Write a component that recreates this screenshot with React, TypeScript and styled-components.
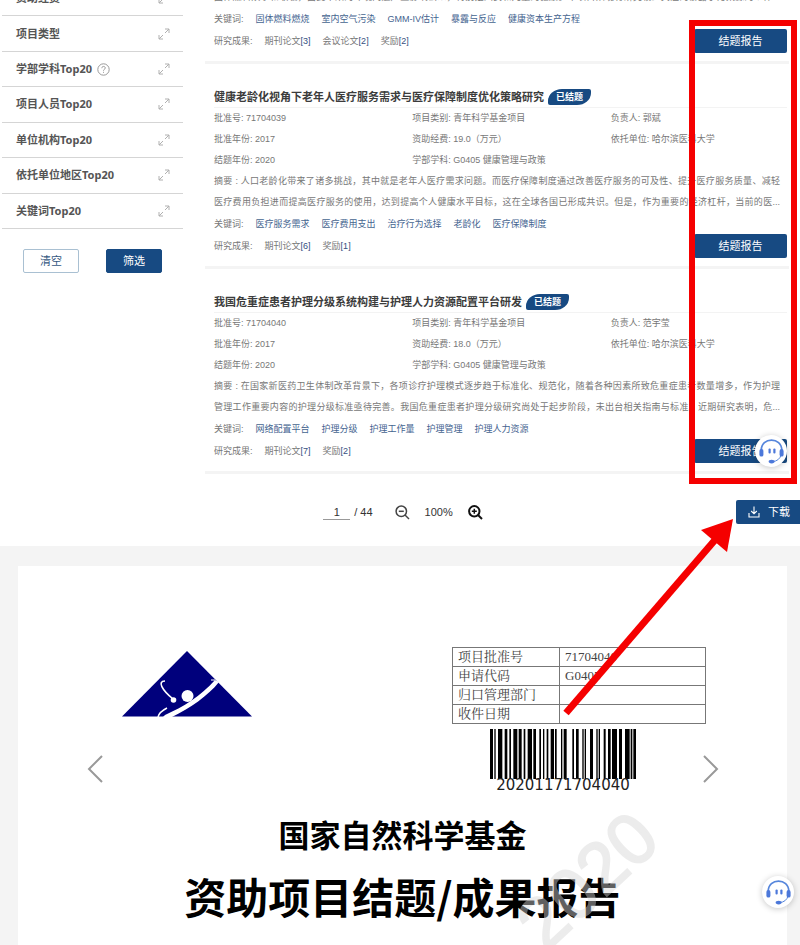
import React from "react";
import styled, { createGlobalStyle } from "styled-components";

const navy = "#174a82";
const ui = `"Liberation Sans", "Noto Sans CJK SC", sans-serif`;
const ui2 = `"Noto Sans", "Noto Sans CJK SC", sans-serif`;

const GlobalStyle = createGlobalStyle`
  * { box-sizing: border-box; }
  body { margin: 0; background: #fff; overflow: hidden; font-family: ${ui}; }
  button, input { font: inherit; }
  a { color: inherit; text-decoration: none; }
`;

const Screen = styled.div`
  position: relative;
  display: flex;
  flex-direction: column;
  height: 100vh;
  overflow: hidden;
`;

const Results = styled.section`
  position: relative;
  display: flex;
  flex: none;
  gap: 22px;
  padding-right: 11px;
  overflow: hidden;
`;

const Sidebar = styled.aside`
  flex: none;
  width: 183px;
  padding-left: 2px;
`;

const FilterList = styled.ul`
  display: grid;
  grid-auto-rows: 1fr;
  height: 248px;
  margin: -19px 0 0;
  padding: 0;
  list-style: none;
`;

const FilterItem = styled.li`
  display: flex;
  align-items: center;
  gap: 5px;
  padding: 0 13px 0 14px;
  border-bottom: 1px solid #d5d5d5;
  font: 700 11px/16px ${ui2};
  color: #555;
`;

const ExpandButton = styled.button`
  display: flex;
  margin-left: auto;
  padding: 0;
  border: 0;
  background: none;
  color: #b0b0b0;
`;

const FilterActions = styled.div`
  display: flex;
  gap: 27px;
  padding: 20px 21px;
`;

const ActionButton = styled.button<{ $filled?: boolean }>`
  width: 56px;
  height: 24px;
  padding: 0;
  border: 1px solid ${(p) => (p.$filled ? navy : "#a9c0d2")};
  border-radius: 2px;
  background: ${(p) => (p.$filled ? navy : "#fff")};
  color: ${(p) => (p.$filled ? "#fff" : "#35587f")};
  font-size: 11px;
  line-height: 20px;
`;

const CardList = styled.main`
  flex: 1;
  min-width: 0;
  margin-top: -13px;
`;

const Card = styled.article<{ $partial?: boolean }>`
  padding: ${(p) => (p.$partial ? "0" : "23px")} 2px 9px 9px;
  border-bottom: 3px solid #f4f4f4;
  font-size: 9px;
  line-height: 21px;
  color: #777;
`;

const CardHead = styled.header`
  display: flex;
  align-items: center;
  gap: 4px;
  height: 21px;
  border-bottom: 1px solid #f3f3f3;
`;

const CardTitle = styled.h2`
  margin: 0;
  font: 700 11px/18px ${ui};
  color: #3c3c3c;
  white-space: nowrap;
`;

const Status = styled.span`
  padding: 0 8px;
  border-radius: 14px 2px / 12px 2px;
  background: ${navy};
  color: #fff;
  font-size: 9px;
  font-weight: 700;
  line-height: 16px;
  white-space: nowrap;
`;

const Facts = styled.div`
  display: grid;
  grid-template-columns: 9fr 9fr 8fr;
`;

const Fact = styled.span`
  height: 21px;
  white-space: nowrap;
`;

const Summary = styled.p`
  margin: 0;
  padding-right: 7px;
`;

const SummaryLine = styled.span`
  display: block;
  height: 21px;
  text-align: justify;
  text-align-last: justify;
`;

const TagRow = styled.div`
  display: flex;
  align-items: center;
  gap: 12px;
  height: 22px;
  white-space: nowrap;
`;

const Tag = styled.a`
  color: #44648f;
`;

const CardFoot = styled.footer`
  display: flex;
  align-items: center;
  gap: 12px;
  height: 22px;
  white-space: nowrap;
`;

const Count = styled.a`
  color: #35507f;
`;

const ReportButton = styled.button`
  width: 93px;
  height: 24px;
  margin-left: auto;
  padding: 0;
  border: 0;
  border-radius: 2px;
  background: ${navy};
  color: #fff;
  font-size: 11px;
  line-height: 22px;
`;

const Toolbar = styled.div`
  display: grid;
  flex: none;
  grid-template-columns: 1fr auto 1fr;
  align-items: center;
  padding: 26px 0 22px;
  color: #333;
  font-size: 11px;
  line-height: 16px;
`;

const Pager = styled.div`
  display: flex;
  grid-column: 2;
  align-items: center;
  padding-left: 6px;
`;

const PageInput = styled.input`
  width: 27px;
  height: 16px;
  margin-right: 4px;
  padding: 0;
  border: 0;
  border-bottom: 1px solid #999;
  background: none;
  color: #333;
  text-align: center;
`;

const ZoomLevel = styled.span`
  margin: 0 15px;
`;

const IconButton = styled.button<{ $spaced?: boolean }>`
  display: flex;
  margin-left: ${(p) => (p.$spaced ? "22px" : "0")};
  padding: 0;
  border: 0;
  background: none;
  color: ${(p) => (p.$spaced ? "#444" : "#111")};
`;

const DownloadButton = styled.button`
  display: flex;
  align-items: center;
  justify-self: end;
  gap: 8px;
  height: 24px;
  padding: 0 10px 0 12px;
  border: 0;
  border-radius: 2px 0 0 2px;
  background: ${navy};
  color: #fff;
  font-size: 11px;
`;

const Viewer = styled.section`
  position: relative;
  flex: 1;
  padding: 20px 13px 0 18px;
  background: #f4f4f4;
`;

const Sheet = styled.div`
  min-height: 100%;
  padding: 81px 81px 0 104px;
  background: #fff;
`;

const SheetHead = styled.div`
  display: flex;
  justify-content: space-between;
`;

const Emblem = styled.div`
  padding-top: 4px;
`;

const Registration = styled.div`
  display: flex;
  flex-direction: column;
  width: 254px;
`;

const RegTable = styled.table`
  width: 100%;
  border-collapse: collapse;
  color: #444;
  font: 13px/18px "Liberation Serif", "Noto Serif CJK SC", "Noto Sans CJK SC", serif;

  th, td {
    height: 18px;
    padding: 0 0 0 5px;
    border: 1px solid #777;
    font-weight: 400;
    line-height: 18px;
    text-align: left;
  }
  th { width: 107px; }
`;

const Barcode = styled.figure`
  display: flex;
  flex-direction: column;
  align-items: center;
  margin: 5px 32px 0 0;
  font: 15px/12px "DejaVu Sans", sans-serif;
  color: #222;
`;

const Headline = styled.h1<{ $large?: boolean }>`
  margin: ${(p) => (p.$large ? "8px" : "20px")} 0 0 -23px;
  color: #000;
  font: 700 ${(p) => (p.$large ? "42px/62px" : "31px/46px")} "Noto Sans CJK SC", sans-serif;
  text-align: center;
  white-space: nowrap;
`;

const Watermark = styled.span`
  position: absolute;
  top: 294px;
  right: 133px;
  color: #d6d6d6;
  -webkit-text-stroke: 2px #d6d6d6;
  opacity: 0.45;
  font: 72px/80px "Liberation Sans", sans-serif;
  transform: rotate(-43deg);
`;

const Turn = styled.button<{ $side: "left" | "right" }>`
  position: absolute;
  top: 208px;
  ${(p) => p.$side}: ${(p) => (p.$side === "left" ? "86px" : "80px")};
  display: flex;
  padding: 0;
  border: 0;
  background: none;
  color: #999;
`;

const HelpButton = styled.button<{ $bottom: number; $right: number }>`
  position: absolute;
  right: ${(p) => p.$right}px;
  bottom: ${(p) => p.$bottom}px;
  display: flex;
  width: 32px;
  height: 32px;
  padding: 0;
  border: 0;
  border-radius: 50%;
  background: #fff;
  box-shadow: 0 1px 6px rgba(0, 0, 0, 0.22);
`;

const Highlight = styled.div`
  position: absolute;
  top: 20px;
  right: 3px;
  width: 108px;
  height: 464px;
  border: 6px solid #f50000;
  pointer-events: none;
`;

const Arrow = styled.svg`
  position: absolute;
  top: 510px;
  right: 55px;
  pointer-events: none;
`;

const ExpandIcon = () => (
  <svg width="12" height="12" viewBox="0 0 12 12" fill="none" stroke="currentColor">
    <path d="M7 1h4v4M11 1 7 5M1 7v4h4M1 11l4-4" />
  </svg>
);

const HelpMark = () => (
  <svg width="13" height="13" viewBox="0 0 13 13" fill="none" stroke="#999">
    <circle cx="6.5" cy="6.5" r="5.7" />
    <path d="M4.8 5.2c0-2.4 3.5-2.2 3.5-.2 0 1.3-1.8 1.2-1.8 2.7M6.5 8.8v1" />
  </svg>
);

const Magnifier = ({ plus }: { plus?: boolean }) => (
  <svg width="15" height="15" viewBox="0 0 15 15" fill="none" stroke="currentColor" strokeWidth={plus ? 2 : 1.5}>
    <circle cx="6.3" cy="6.3" r="5.2" />
    <path d="m10 10 4 4" />
    <path d={plus ? "M3.8 6.3h5M6.3 3.8v5" : "M3.8 6.3h5"} strokeWidth="1.5" />
  </svg>
);

const DownloadIcon = () => (
  <svg width="12" height="12" viewBox="0 0 12 12" fill="none" stroke="#fff" strokeWidth="1.1">
    <path d="M6 .5v7.2M3.2 5 6 7.8 8.8 5M1 7v4h10V7" />
  </svg>
);

const Headset = () => (
  <svg width="32" height="32" viewBox="0 0 32 32" fill="none">
    <path d="M6.2 15.5C6.2 1.6 26.8 1.6 26.8 15.5" stroke="#5686dc" strokeWidth="1.7" />
    <path d="M26 20c-.8 3.6-4 6.3-8.2 6.6" stroke="#5686dc" strokeWidth="1" />
    <rect x="4.4" y="14" width="4" height="7.6" rx="1.9" fill="#4c78da" />
    <rect x="24.6" y="14" width="4" height="7.6" rx="1.9" fill="#4c78da" />
    <rect x="13.5" y="13.5" width="2.2" height="5" rx="1" fill="#4c78da" />
    <rect x="18.3" y="13.5" width="2.2" height="5" rx="1" fill="#4c78da" />
    <ellipse cx="16.6" cy="26.6" rx="3" ry="1.8" fill="#4c78da" />
  </svg>
);

const Chevron = ({ flip }: { flip?: boolean }) => (
  <svg width="18" height="30" viewBox="0 0 18 30" fill="none" stroke="currentColor" strokeWidth="2">
    <path d={flip ? "m2 2 13 13L2 28" : "M16 2 3 15l13 13"} />
  </svg>
);

const FoundationLogo = () => (
  <svg width="130" height="66" viewBox="0 0 130 66">
    <path d="M65 0 130 65.5H0Z" fill="#00007c" />
    <path d="M93 29C79 45 61 56 43 64l-2 2h9C68 57 86 45 97 31Z" fill="#fff" />
    <path d="M43 30c-8 0-3 9 8 18" stroke="#fff" strokeWidth="1.6" fill="none" />
    <path d="M36 66c1-4 5-7 9-9" stroke="#fff" strokeWidth="1.5" fill="none" />
    <path d="M89 29h4" stroke="#fff" />
    <circle cx="51.5" cy="49" r="2.8" fill="#fff" />
    <circle cx="65.5" cy="45" r="6" fill="#fff" />
  </svg>
);

/* Bars as [x, width] in a 438-unit wide symbol. */
const bars: [number, number][] = [
  [0, 9], [13, 4], [24, 13], [44, 8], [58, 5], [70, 12], [86, 9], [101, 5], [113, 13], [130, 8],
  [148, 5], [159, 4], [170, 5], [182, 10], [195, 5], [213, 4], [221, 9], [247, 5], [258, 8], [277, 4],
  [284, 4], [300, 9], [319, 4], [326, 4], [341, 6], [354, 8], [366, 15], [387, 9], [405, 14], [422, 5], [430, 8],
];

const filters = ["资助经费", "项目类型", "学部学科Top20", "项目人员Top20", "单位机构Top20", "依托单位地区Top20", "关键词Top20"];

interface Project {
  title?: string;
  facts?: string[];
  summary: string[];
  tags: string[];
  outcomes: [string, number][];
}

const projects: Project[] = [
  {
    summary: ["固体燃料炊事和取暖，由此带来的环境问题严重影响公众，特别是妇女和儿童的健康。本项目从现有研究较少关注的暴露于污染源的个体..."],
    tags: ["固体燃料燃烧", "室内空气污染", "GMM-IV估计", "暴露与反应", "健康资本生产方程"],
    outcomes: [["期刊论文", 3], ["会议论文", 2], ["奖励", 2]],
  },
  {
    title: "健康老龄化视角下老年人医疗服务需求与医疗保障制度优化策略研究",
    facts: [
      "批准号: 71704039", "项目类别: 青年科学基金项目", "负责人: 郭斌",
      "批准年份: 2017", "资助经费: 19.0（万元）", "依托单位: 哈尔滨医科大学",
      "结题年份: 2020", "学部学科: G0405 健康管理与政策",
    ],
    summary: [
      "摘要 : 人口老龄化带来了诸多挑战，其中就是老年人医疗需求问题。而医疗保障制度通过改善医疗服务的可及性、提升医疗服务质量、减轻",
      "医疗费用负担进而提高医疗服务的使用，达到提高个人健康水平目标，这在全球各国已形成共识。但是，作为重要的经济杠杆，当前的医...",
    ],
    tags: ["医疗服务需求", "医疗费用支出", "治疗行为选择", "老龄化", "医疗保障制度"],
    outcomes: [["期刊论文", 6], ["奖励", 1]],
  },
  {
    title: "我国危重症患者护理分级系统构建与护理人力资源配置平台研发",
    facts: [
      "批准号: 71704040", "项目类别: 青年科学基金项目", "负责人: 范宇莹",
      "批准年份: 2017", "资助经费: 18.0（万元）", "依托单位: 哈尔滨医科大学",
      "结题年份: 2020", "学部学科: G0405 健康管理与政策",
    ],
    summary: [
      "摘要 : 在国家新医药卫生体制改革背景下，各项诊疗护理模式逐步趋于标准化、规范化，随着各种因素所致危重症患者数量增多，作为护理",
      "管理工作重要内容的护理分级标准亟待完善。我国危重症患者护理分级研究尚处于起步阶段，未出台相关指南与标准。近期研究表明，危...",
    ],
    tags: ["网络配置平台", "护理分级", "护理工作量", "护理管理", "护理人力资源"],
    outcomes: [["期刊论文", 7], ["奖励", 2]],
  },
];

const registration = [["项目批准号", "71704040"], ["申请代码", "G0405"], ["归口管理部门", ""], ["收件日期", ""]];

const ProjectCard = ({ project }: { project: Project }) => (
  <Card $partial={!project.title}>
    {project.title && (
      <CardHead>
        <CardTitle>{project.title}</CardTitle>
        <Status>已结题</Status>
      </CardHead>
    )}
    {project.facts && (
      <Facts>{project.facts.map((f) => <Fact key={f}>{f}</Fact>)}</Facts>
    )}
    <Summary>{project.summary.map((l) => <SummaryLine key={l}>{l}</SummaryLine>)}</Summary>
    <TagRow>
      <span>关键词:</span>
      {project.tags.map((t) => <Tag href="#" key={t}>{t}</Tag>)}
    </TagRow>
    <CardFoot>
      <span>研究成果:</span>
      {project.outcomes.map(([name, n]) => (
        <span key={name}>{name}<Count href="#">[{n}]</Count></span>
      ))}
      <ReportButton>结题报告</ReportButton>
    </CardFoot>
  </Card>
);

export default function App() {
  return (
    <Screen lang="zh-CN">
      <GlobalStyle />
      <Results>
        <Sidebar>
          <FilterList>
            {filters.map((f) => (
              <FilterItem key={f}>
                {f}
                {f.startsWith("学部") && <HelpMark />}
                <ExpandButton aria-label={`展开${f}`}><ExpandIcon /></ExpandButton>
              </FilterItem>
            ))}
          </FilterList>
          <FilterActions>
            <ActionButton>清空</ActionButton>
            <ActionButton $filled>筛选</ActionButton>
          </FilterActions>
        </Sidebar>
        <CardList>
          {projects.map((p) => <ProjectCard key={p.tags[0]} project={p} />)}
        </CardList>
        <HelpButton $right={13} $bottom={7} aria-label="在线客服"><Headset /></HelpButton>
      </Results>
      <Toolbar>
        <Pager>
          <PageInput aria-label="页码" defaultValue="1" />
          <span>/ 44</span>
          <IconButton $spaced aria-label="缩小"><Magnifier /></IconButton>
          <ZoomLevel>100%</ZoomLevel>
          <IconButton aria-label="放大"><Magnifier plus /></IconButton>
        </Pager>
        <DownloadButton><DownloadIcon />下载</DownloadButton>
      </Toolbar>
      <Viewer>
        <Sheet>
          <SheetHead>
            <Emblem><FoundationLogo /></Emblem>
            <Registration>
              <RegTable>
                <tbody>
                  {registration.map(([k, v]) => (
                    <tr key={k}><th scope="row">{k}</th><td>{v}</td></tr>
                  ))}
                </tbody>
              </RegTable>
              <Barcode>
                <svg width="146" height="50" viewBox="0 0 438 150">
                  {bars.map(([x, w]) => <rect key={x} x={x} width={w} height="150" fill="#000" />)}
                </svg>
                <figcaption>20201171704040</figcaption>
              </Barcode>
            </Registration>
          </SheetHead>
          <Headline>国家自然科学基金</Headline>
          <Headline $large>资助项目结题/成果报告</Headline>
        </Sheet>
        <Watermark>2020</Watermark>
        <Turn $side="left" aria-label="上一页"><Chevron /></Turn>
        <Turn $side="right" aria-label="下一页"><Chevron flip /></Turn>
        <HelpButton $right={6} $bottom={37} aria-label="在线客服"><Headset /></HelpButton>
      </Viewer>
      <Highlight />
      <Arrow width="185" height="210" viewBox="0 0 185 210">
        <path d="M6 203 161 23" stroke="#f50000" strokeWidth="7" />
        <path d="M173 9 141 20l26 22Z" fill="#f50000" />
      </Arrow>
    </Screen>
  );
}
